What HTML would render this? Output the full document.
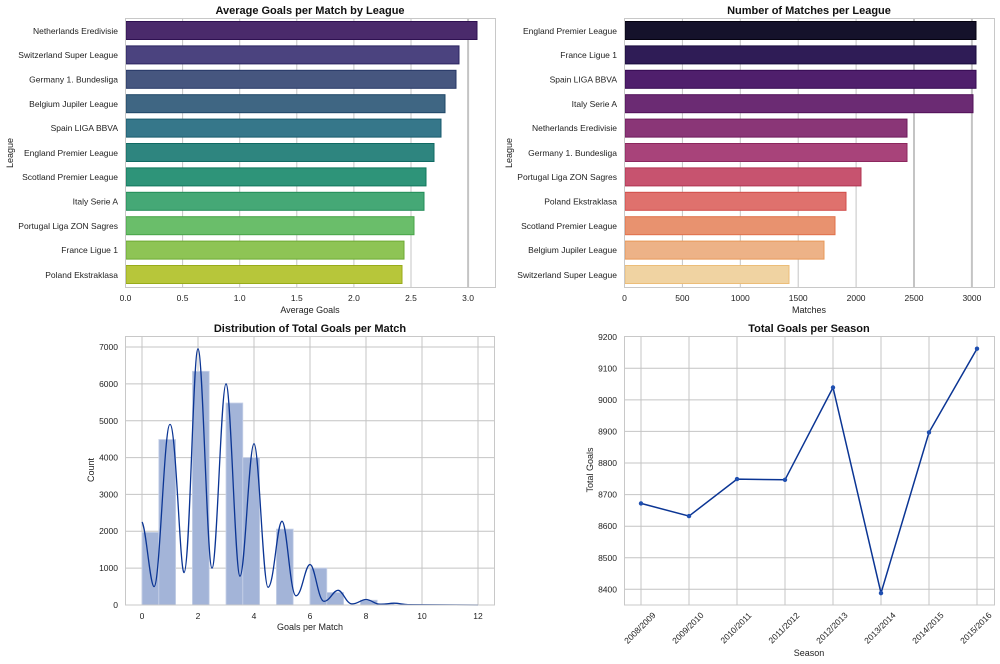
<!DOCTYPE html>
<html><head><meta charset="utf-8"><style>
html,body{margin:0;padding:0;background:#fff;width:1000px;height:664px;overflow:hidden}
svg{display:block;font-family:"Liberation Sans",Arial,sans-serif}
.t{font-size:11px;font-weight:bold;fill:#111;text-anchor:middle}
.tk{font-size:8.5px;fill:#222}
.al{font-size:9px;fill:#222;text-anchor:middle}
.g{stroke:#c4c4c4;stroke-width:1}
.sp{fill:none;stroke:#c8c8c8;stroke-width:1}
</style></head><body>
<svg width="1000" height="664" viewBox="0 0 1000 664" xmlns="http://www.w3.org/2000/svg">
<!-- Plot 1 -->
<text class="t" x="310" y="14">Average Goals per Match by League</text>
<g class="g">
<line x1="182.6" y1="18" x2="182.6" y2="287"/><line x1="239.7" y1="18" x2="239.7" y2="287"/><line x1="296.8" y1="18" x2="296.8" y2="287"/><line x1="353.9" y1="18" x2="353.9" y2="287"/><line x1="411" y1="18" x2="411" y2="287"/><line x1="468.1" y1="18" x2="468.1" y2="287" stroke-width="2"/>
</g>
<g stroke-width="1">
<rect x="126" y="21.5" width="351" height="18" fill="#4a2a6b" stroke="#2e1050"/>
<rect x="126" y="45.9" width="333" height="18" fill="#4b437f" stroke="#2a2360"/>
<rect x="126" y="70.3" width="330" height="18" fill="#46567f" stroke="#263766"/>
<rect x="126" y="94.7" width="319" height="18" fill="#3f6683" stroke="#1e4666"/>
<rect x="126" y="119.1" width="315" height="18" fill="#36778a" stroke="#175a6c"/>
<rect x="126" y="143.5" width="308" height="18" fill="#2e857f" stroke="#106a63"/>
<rect x="126" y="167.9" width="300" height="18" fill="#2e9479" stroke="#10775c"/>
<rect x="126" y="192.3" width="298" height="18" fill="#45a876" stroke="#228c58"/>
<rect x="126" y="216.7" width="288" height="18" fill="#6abe6a" stroke="#48a448"/>
<rect x="126" y="241.1" width="278" height="18" fill="#8ec455" stroke="#6eaa33"/>
<rect x="126" y="265.5" width="276" height="18" fill="#b7c63a" stroke="#98ab1a"/>
</g>
<rect class="sp" x="125.5" y="18.5" width="370" height="269"/>
<g class="tk" text-anchor="end">
<text x="118" y="34">Netherlands Eredivisie</text><text x="118" y="58">Switzerland Super League</text><text x="118" y="82.5">Germany 1. Bundesliga</text><text x="118" y="107">Belgium Jupiler League</text><text x="118" y="131">Spain LIGA BBVA</text><text x="118" y="156">England Premier League</text><text x="118" y="180">Scotland Premier League</text><text x="118" y="204.5">Italy Serie A</text><text x="118" y="229">Portugal Liga ZON Sagres</text><text x="118" y="253">France Ligue 1</text><text x="118" y="278">Poland Ekstraklasa</text>
</g>
<g class="tk" text-anchor="middle">
<text x="125.5" y="301">0.0</text><text x="182.6" y="301">0.5</text><text x="239.7" y="301">1.0</text><text x="296.8" y="301">1.5</text><text x="353.9" y="301">2.0</text><text x="411" y="301">2.5</text><text x="468.1" y="301">3.0</text>
</g>
<text class="al" x="310" y="313">Average Goals</text>
<text class="al" transform="translate(13,153) rotate(-90)">League</text>

<!-- Plot 2 -->
<text class="t" x="809" y="14">Number of Matches per League</text>
<g class="g">
<line x1="682.4" y1="18" x2="682.4" y2="287"/><line x1="740.3" y1="18" x2="740.3" y2="287"/><line x1="798.2" y1="18" x2="798.2" y2="287"/><line x1="856.1" y1="18" x2="856.1" y2="287"/><line x1="914" y1="18" x2="914" y2="287" stroke-width="2"/><line x1="971.9" y1="18" x2="971.9" y2="287" stroke-width="2"/>
</g>
<g stroke-width="1">
<rect x="625" y="21.5" width="351" height="18" fill="#15122b" stroke="#050210"/>
<rect x="625" y="45.9" width="351" height="18" fill="#2f1c56" stroke="#180a3c"/>
<rect x="625" y="70.3" width="351" height="18" fill="#4f1f6c" stroke="#350a52"/>
<rect x="625" y="94.7" width="348" height="18" fill="#6b2b73" stroke="#501058"/>
<rect x="625" y="119.1" width="282" height="18" fill="#8a3677" stroke="#6e1a5b"/>
<rect x="625" y="143.5" width="282" height="18" fill="#a8437a" stroke="#8c275e"/>
<rect x="625" y="167.9" width="236" height="18" fill="#c7536f" stroke="#b03451"/>
<rect x="625" y="192.3" width="221" height="18" fill="#df716d" stroke="#d04d4a"/>
<rect x="625" y="216.7" width="210" height="18" fill="#e8926f" stroke="#e0704a"/>
<rect x="625" y="241.1" width="199" height="18" fill="#edb287" stroke="#e89858"/>
<rect x="625" y="265.5" width="164" height="18" fill="#f0d3a2" stroke="#ecbd78"/>
</g>
<rect class="sp" x="624.5" y="18.5" width="370" height="269"/>
<g class="tk" text-anchor="end">
<text x="617" y="34">England Premier League</text><text x="617" y="58">France Ligue 1</text><text x="617" y="82.5">Spain LIGA BBVA</text><text x="617" y="107">Italy Serie A</text><text x="617" y="131">Netherlands Eredivisie</text><text x="617" y="156">Germany 1. Bundesliga</text><text x="617" y="180">Portugal Liga ZON Sagres</text><text x="617" y="204.5">Poland Ekstraklasa</text><text x="617" y="229">Scotland Premier League</text><text x="617" y="253">Belgium Jupiler League</text><text x="617" y="278">Switzerland Super League</text>
</g>
<g class="tk" text-anchor="middle">
<text x="624.5" y="301">0</text><text x="682.4" y="301">500</text><text x="740.3" y="301">1000</text><text x="798.2" y="301">1500</text><text x="856.1" y="301">2000</text><text x="914" y="301">2500</text><text x="971.9" y="301">3000</text>
</g>
<text class="al" x="809" y="313">Matches</text>
<text class="al" transform="translate(512,153) rotate(-90)">League</text>

<!-- Plot 3 -->
<text class="t" x="310" y="332">Distribution of Total Goals per Match</text>
<g class="g">
<line x1="125" y1="347" x2="495" y2="347"/><line x1="125" y1="383.9" x2="495" y2="383.9"/><line x1="125" y1="420.7" x2="495" y2="420.7"/><line x1="125" y1="457.6" x2="495" y2="457.6"/><line x1="125" y1="494.4" x2="495" y2="494.4"/><line x1="125" y1="531.3" x2="495" y2="531.3"/><line x1="125" y1="568.1" x2="495" y2="568.1"/>
<line x1="142" y1="336" x2="142" y2="605"/><line x1="198" y1="336" x2="198" y2="605"/><line x1="254" y1="336" x2="254" y2="605"/><line x1="310" y1="336" x2="310" y2="605"/><line x1="366" y1="336" x2="366" y2="605"/><line x1="422" y1="336" x2="422" y2="605"/><line x1="478" y1="336" x2="478" y2="605"/>
</g>
<g fill="#a3b4d8" stroke="#c8d2e8" stroke-width="0.8">
<rect x="142" y="532.4" width="16.8" height="72.6"/>
<rect x="158.8" y="439.5" width="16.8" height="165.5"/>
<rect x="192.4" y="371.3" width="16.8" height="233.7"/>
<rect x="226" y="403" width="16.8" height="202"/>
<rect x="242.8" y="457.6" width="16.8" height="147.4"/>
<rect x="276.4" y="529.1" width="16.8" height="75.9"/>
<rect x="310" y="568.1" width="16.8" height="36.9"/>
<rect x="326.8" y="592.5" width="16.8" height="12.5"/>
<rect x="360.4" y="600.2" width="16.8" height="4.8"/>
<rect x="377.2" y="603.5" width="16.8" height="1.5"/>
</g>
<path fill="none" stroke="#0b3594" stroke-width="1.3" d="M142,522 C146,527 150,586 154,586.6 C160,587 164,424 170,424.4 C176,424 180,573 184,572.6 C190,572 193,349 198,348.8 C203,349 207,568 212,568.1 C217,568 221,384 226,383.8 C231,384 235,576 240,576.2 C245,576 249,443.6 254,443.6 C259,443.6 263,587.3 268,587.3 C274,587.3 277,521.3 282,521.3 C287,521.3 290,595.8 296,595.8 C302,595.8 305,564.5 310,564.5 C315,564.5 318,601.3 324,601.3 C330,601.3 333,590.3 338,590.3 C343,590.3 346,603.9 352,603.9 C358,603.9 361,599.5 366,599.5 C371,599.5 375,604.3 380,604.3 C386,604.3 389,603.2 394,603.2 C399,603.2 403,604.6 408,604.6 L478,605"/>
<rect class="sp" x="125.5" y="336.5" width="369" height="268.5"/>
<g class="tk" text-anchor="end">
<text x="118" y="608">0</text><text x="118" y="571">1000</text><text x="118" y="534">2000</text><text x="118" y="497.5">3000</text><text x="118" y="460.5">4000</text><text x="118" y="424">5000</text><text x="118" y="387">6000</text><text x="118" y="350">7000</text>
</g>
<g class="tk" text-anchor="middle">
<text x="142" y="619">0</text><text x="198" y="619">2</text><text x="254" y="619">4</text><text x="310" y="619">6</text><text x="366" y="619">8</text><text x="422" y="619">10</text><text x="478" y="619">12</text>
</g>
<text class="al" x="310" y="630">Goals per Match</text>
<text class="al" transform="translate(94,470) rotate(-90)">Count</text>

<!-- Plot 4 -->
<text class="t" x="809" y="332">Total Goals per Season</text>
<g class="g">
<line x1="625" y1="368.3" x2="995" y2="368.3"/><line x1="625" y1="399.9" x2="995" y2="399.9"/><line x1="625" y1="431.4" x2="995" y2="431.4"/><line x1="625" y1="463" x2="995" y2="463"/><line x1="625" y1="494.6" x2="995" y2="494.6"/><line x1="625" y1="526.2" x2="995" y2="526.2"/><line x1="625" y1="557.8" x2="995" y2="557.8"/><line x1="625" y1="589.3" x2="995" y2="589.3"/>
<line x1="641" y1="336" x2="641" y2="605"/><line x1="689" y1="336" x2="689" y2="605"/><line x1="737" y1="336" x2="737" y2="605"/><line x1="785" y1="336" x2="785" y2="605"/><line x1="833" y1="336" x2="833" y2="605"/><line x1="881" y1="336" x2="881" y2="605"/><line x1="929" y1="336" x2="929" y2="605"/><line x1="977" y1="336" x2="977" y2="605"/>
</g>
<rect class="sp" x="624.5" y="336.5" width="370" height="268.5"/>
<polyline fill="none" stroke="#0b3594" stroke-width="1.5" points="641,503.4 689,516.1 737,479.1 785,479.8 833,387.5 881,593.1 929,432.4 977,348.7"/>
<g fill="#1f4fb0"><circle cx="641" cy="503.4" r="2.2"/><circle cx="689" cy="516.1" r="2.2"/><circle cx="737" cy="479.1" r="2.2"/><circle cx="785" cy="479.8" r="2.2"/><circle cx="833" cy="387.5" r="2.2"/><circle cx="881" cy="593.1" r="2.2"/><circle cx="929" cy="432.4" r="2.2"/><circle cx="977" cy="348.7" r="2.2"/></g>
<g class="tk" text-anchor="end">
<text x="617" y="340">9200</text><text x="617" y="371.5">9100</text><text x="617" y="403">9000</text><text x="617" y="434.5">8900</text><text x="617" y="466">8800</text><text x="617" y="497.5">8700</text><text x="617" y="529">8600</text><text x="617" y="561">8500</text><text x="617" y="592.5">8400</text>
</g>
<g class="tk" text-anchor="middle">
<text transform="translate(642,630) rotate(-45)">2008/2009</text><text transform="translate(690,630) rotate(-45)">2009/2010</text><text transform="translate(738,630) rotate(-45)">2010/2011</text><text transform="translate(786,630) rotate(-45)">2011/2012</text><text transform="translate(834,630) rotate(-45)">2012/2013</text><text transform="translate(882,630) rotate(-45)">2013/2014</text><text transform="translate(930,630) rotate(-45)">2014/2015</text><text transform="translate(978,630) rotate(-45)">2015/2016</text>
</g>
<text class="al" x="809" y="656">Season</text>
<text class="al" transform="translate(593,470) rotate(-90)">Total Goals</text>
</svg>
</body></html>
